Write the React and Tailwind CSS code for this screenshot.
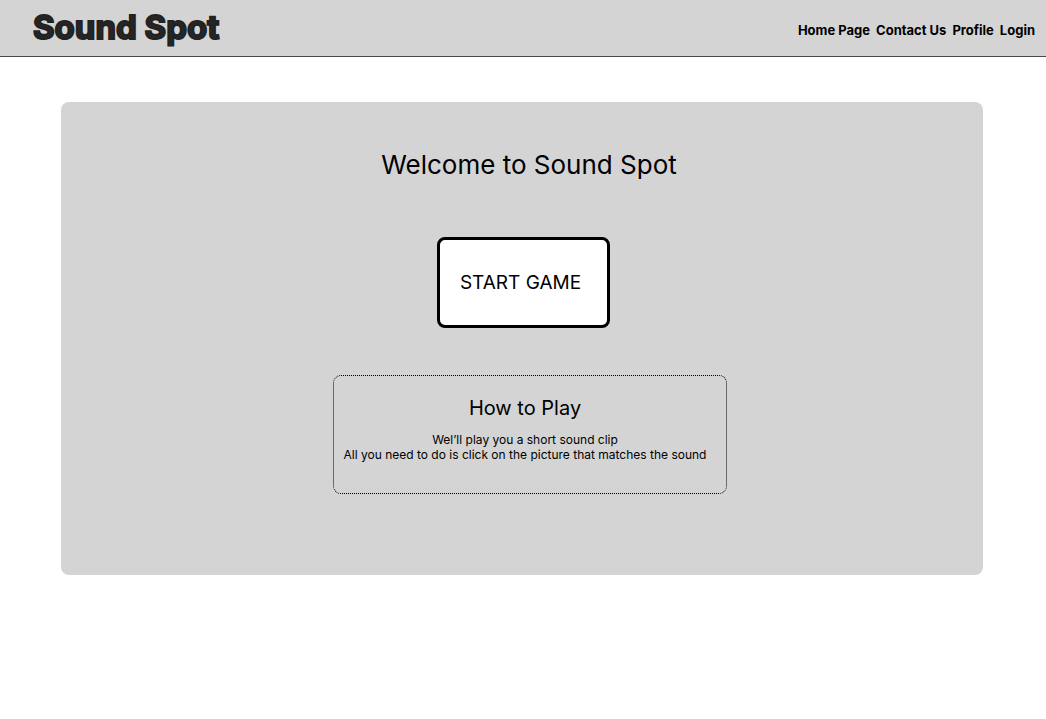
const links = ["Home Page", "Contact Us", "Profile", "Login"];

export default function App() {
  return (
    <div className="min-h-screen bg-white text-black font-['Inter',sans-serif]">
      <header className="flex h-[57px] items-center justify-between border-b border-[#4a4a4a] bg-[#d4d4d4] pr-[11px] pl-[33px]">
        <a href="#home" className="pb-0.5 text-[33px] leading-10 font-bold text-[#262626] [-webkit-text-stroke:2px_#222222]">
          Sound Spot
        </a>
        <nav className="flex gap-1.5 pt-1.5 text-[13px] font-bold">
          {links.map((label) => (
            <a key={label} href="#">{label}</a>
          ))}
        </nav>
      </header>
      <main className="mt-[45px] mr-[63px] ml-[61px] flex flex-col items-center rounded-lg bg-[#d4d4d4] pt-[47px] pb-[81px]">
        <h1 className="pl-[14px] text-[26px] leading-8">Welcome to Sound Spot</h1>
        <button type="button" className="mt-14 ml-[3px] h-[91px] w-[173px] rounded-lg border-[3px] border-black bg-white pt-0.5 pr-1.5 text-[19px]">
          START GAME
        </button>
        <section className="mt-[47px] ml-4 w-[394px] rounded-lg border border-dotted border-black pt-5 pr-[10px] pb-[31px] text-center">
          <h2 className="text-xl leading-6">How to Play</h2>
          <p className="mt-3 text-xs leading-[15px]">
            Wel’ll play you a short sound clip
            <br />
            All you need to do is click on the picture that matches the sound
          </p>
        </section>
      </main>
    </div>
  );
}
